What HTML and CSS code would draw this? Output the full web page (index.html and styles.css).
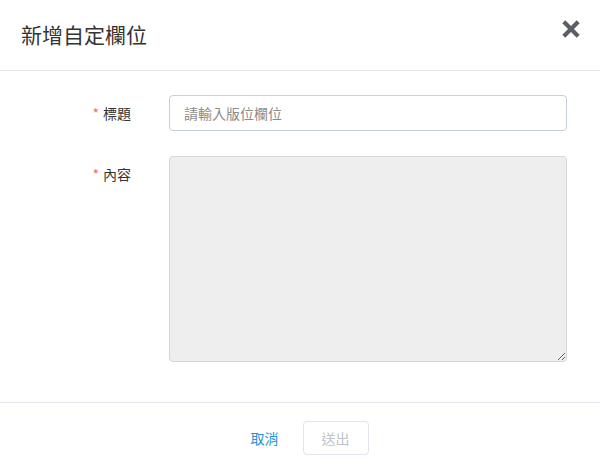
FILE: index.html
```html
<!DOCTYPE html>
<html lang="zh-Hant">
<head>
<meta charset="utf-8">
<link rel="stylesheet" href="styles.css">
</head>
<body>
<div class="dialog">
  <div class="header">
    <h2 class="title">新增自定欄位</h2>
    <button class="close" aria-label="close">
      <svg width="20" height="20" viewBox="0 0 20 20"><path d="M2.8 2.8 L17.2 17.2 M17.2 2.8 L2.8 17.2" stroke="#5a5e66" stroke-width="4.2" stroke-linecap="butt"/></svg>
    </button>
  </div>
  <div class="body">
    <div class="row">
      <label class="label"><span class="req">*</span>標題</label>
      <input class="input" type="text" placeholder="請輸入版位欄位">
    </div>
    <div class="row">
      <label class="label top"><span class="req">*</span>內容</label>
      <textarea class="textarea" readonly></textarea>
    </div>
  </div>
  <div class="footer">
    <button class="btn text">取消</button>
    <button class="btn plain">送出</button>
  </div>
</div>
</body>
</html>
```
FILE: styles.css
```css
* { box-sizing: border-box; }
body {
  margin: 0;
  background: #fff;
  font-family: "Noto Sans CJK TC", "Noto Sans", sans-serif;
  color: #333;
}
.dialog { width: 600px; }
.header {
  height: 71px;
  border-bottom: 1px solid #e4e7ed;
  display: flex;
  align-items: center;
  justify-content: space-between;
  padding: 0 19px 0 21px;
}
.title {
  margin: 0;
  font-size: 21px;
  font-weight: 400;
  color: #333;
  line-height: 1;
  position: relative;
  top: -1px;
}
.close {
  border: 0;
  background: none;
  padding: 0;
  width: 20px;
  height: 20px;
  display: flex;
  position: relative;
  top: -6px;
  cursor: pointer;
}
.body {
  padding: 24px 33px 40px 0;
  display: flex;
  flex-direction: column;
  gap: 25px;
}
.row {
  display: flex;
  gap: 38px;
  align-items: center;
}
.row:last-child { align-items: flex-start; }
.label {
  width: 131px;
  text-align: right;
  font-size: 14px;
  color: #333;
  line-height: 20px;
}
.label.top { padding-top: 8px; }
.req { color: #f56c6c; margin-right: 4px; }
.input {
  flex: 1;
  height: 36px;
  border: 1px solid #c7cfdc;
  border-radius: 4px;
  padding: 0 14px;
  font-family: inherit;
  font-size: 14px;
  color: #333;
  outline: none;
}
.input::placeholder { color: #8c8c8c; }
.textarea {
  flex: 1;
  height: 206px;
  background: #eeeeee;
  border: 1px solid #d6d6d6;
  border-radius: 4px;
  resize: vertical;
  font-family: inherit;
  outline: none;
}
.footer {
  border-top: 1px solid #e4e7ed;
  display: flex;
  justify-content: center;
  gap: 5px;
  padding: 18px 0 0;
}
.btn {
  width: 66px;
  height: 34px;
  border-radius: 4px;
  font-family: inherit;
  font-size: 14px;
  background: #fff;
  cursor: pointer;
}
.btn.text { border: 0; color: #2b8fd8; padding: 0; }
.btn.plain { border: 1px solid #dfe4ed; color: #c0c4cc; }
```
